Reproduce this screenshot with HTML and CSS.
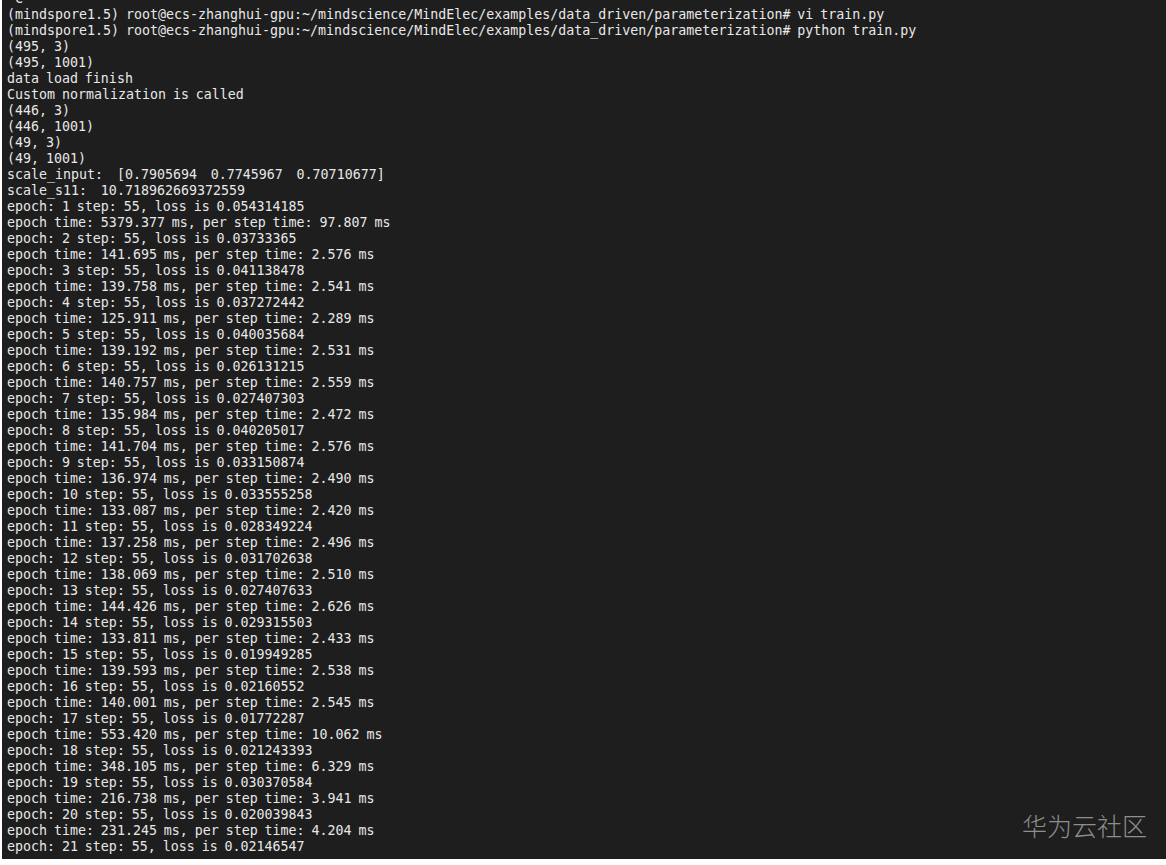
FILE: index.html
```html
<!DOCTYPE html>
<html>
<head>
<meta charset="utf-8">
<link rel="stylesheet" href="styles.css">
</head>
<body>
<div class="page">
<div class="terminal">
<pre class="log">^C
(mindspore1.5) root@ecs-zhanghui-gpu:~/mindscience/MindElec/examples/data_driven/parameterization# vi train.py
(mindspore1.5) root@ecs-zhanghui-gpu:~/mindscience/MindElec/examples/data_driven/parameterization# python train.py
(495, 3)
(495, 1001)
data load finish
Custom normalization is called
(446, 3)
(446, 1001)
(49, 3)
(49, 1001)
scale_input:  [0.7905694  0.7745967  0.70710677]
scale_s11:  10.718962669372559
epoch: 1 step: 55, loss is 0.054314185
epoch time: 5379.377 ms, per step time: 97.807 ms
epoch: 2 step: 55, loss is 0.03733365
epoch time: 141.695 ms, per step time: 2.576 ms
epoch: 3 step: 55, loss is 0.041138478
epoch time: 139.758 ms, per step time: 2.541 ms
epoch: 4 step: 55, loss is 0.037272442
epoch time: 125.911 ms, per step time: 2.289 ms
epoch: 5 step: 55, loss is 0.040035684
epoch time: 139.192 ms, per step time: 2.531 ms
epoch: 6 step: 55, loss is 0.026131215
epoch time: 140.757 ms, per step time: 2.559 ms
epoch: 7 step: 55, loss is 0.027407303
epoch time: 135.984 ms, per step time: 2.472 ms
epoch: 8 step: 55, loss is 0.040205017
epoch time: 141.704 ms, per step time: 2.576 ms
epoch: 9 step: 55, loss is 0.033150874
epoch time: 136.974 ms, per step time: 2.490 ms
epoch: 10 step: 55, loss is 0.033555258
epoch time: 133.087 ms, per step time: 2.420 ms
epoch: 11 step: 55, loss is 0.028349224
epoch time: 137.258 ms, per step time: 2.496 ms
epoch: 12 step: 55, loss is 0.031702638
epoch time: 138.069 ms, per step time: 2.510 ms
epoch: 13 step: 55, loss is 0.027407633
epoch time: 144.426 ms, per step time: 2.626 ms
epoch: 14 step: 55, loss is 0.029315503
epoch time: 133.811 ms, per step time: 2.433 ms
epoch: 15 step: 55, loss is 0.019949285
epoch time: 139.593 ms, per step time: 2.538 ms
epoch: 16 step: 55, loss is 0.02160552
epoch time: 140.001 ms, per step time: 2.545 ms
epoch: 17 step: 55, loss is 0.01772287
epoch time: 553.420 ms, per step time: 10.062 ms
epoch: 18 step: 55, loss is 0.021243393
epoch time: 348.105 ms, per step time: 6.329 ms
epoch: 19 step: 55, loss is 0.030370584
epoch time: 216.738 ms, per step time: 3.941 ms
epoch: 20 step: 55, loss is 0.020039843
epoch time: 231.245 ms, per step time: 4.204 ms
epoch: 21 step: 55, loss is 0.02146547</pre>
<div class="watermark">华为云社区</div>
</div>
<div class="below"></div>
</div>
</body>
</html>
```

FILE: styles.css
```css
html, body {
  margin: 0;
  padding: 0;
  background: #ffffff;
}
.page {
  width: 1166px;
  height: 865px;
  display: flex;
  flex-direction: column;
  overflow: hidden;
}
.terminal {
  position: relative;
  height: 859px;
  flex: none;
  background: #1e1e1e;
  overflow: hidden;
  margin-left: 2px;
}
.log {
  margin: -9px 0 0 0;
  padding: 0 0 0 5px;
  font-family: "DejaVu Sans Mono", monospace;
  font-size: 13.3px;
  line-height: 16px;
  word-spacing: -1.1px;
  color: #e8e8e8;
  white-space: pre;
}
.watermark {
  position: absolute;
  right: 19px;
  bottom: 19px;
  font-family: "Noto Sans CJK SC", sans-serif;
  font-size: 25px;
  font-weight: 300;
  line-height: 30px;
  color: #8e8e8e;
}
.below {
  flex: 1;
  background: #ffffff;
}
```
